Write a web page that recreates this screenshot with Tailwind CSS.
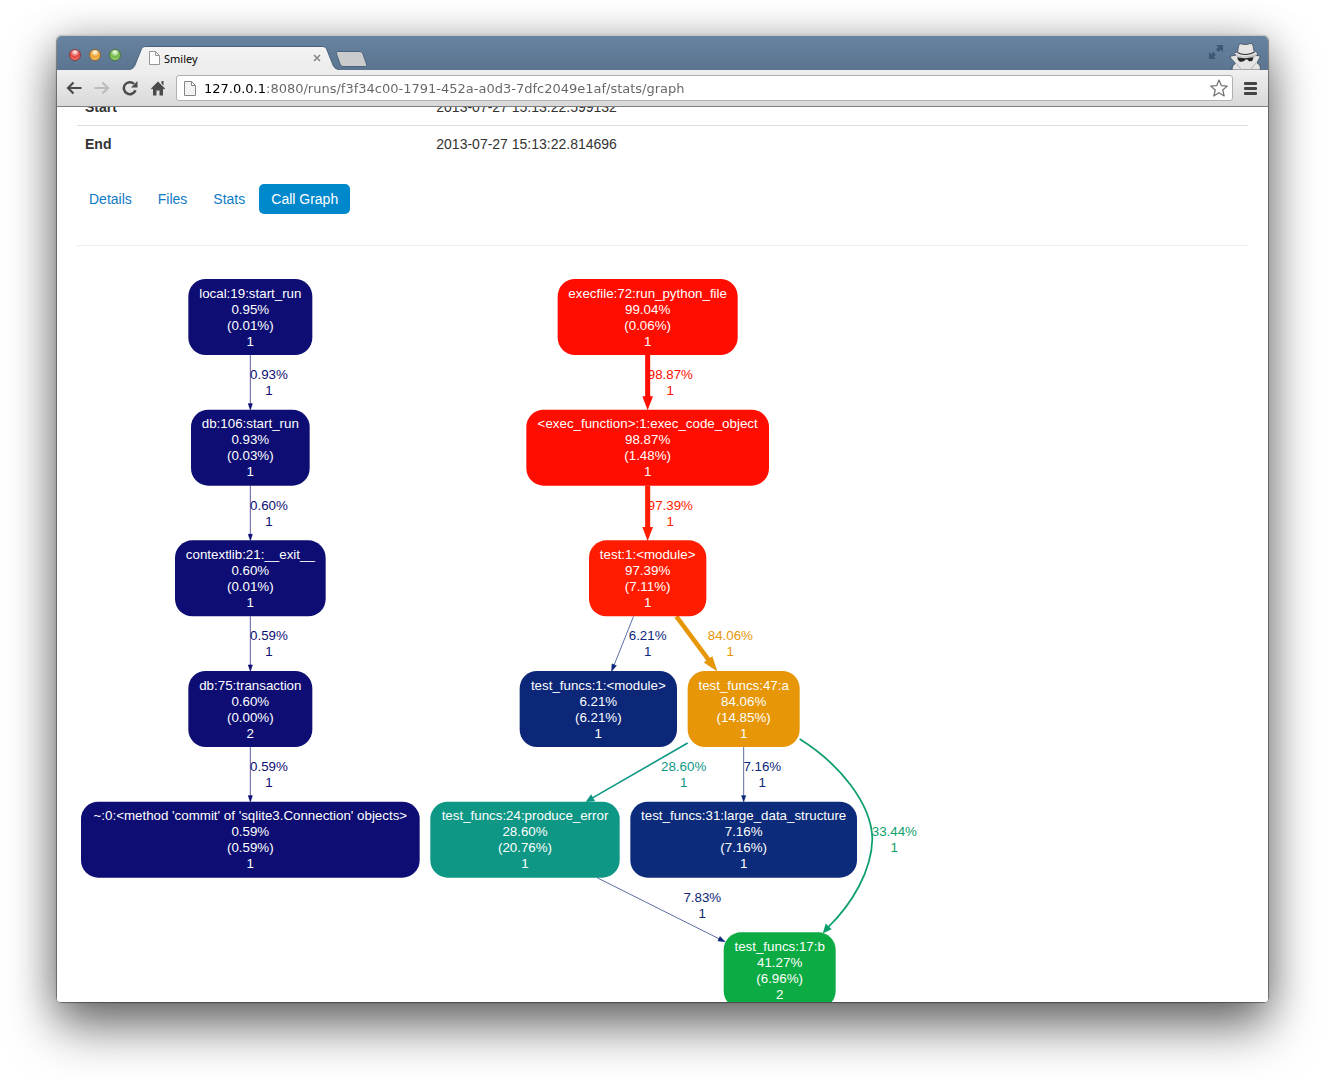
<!DOCTYPE html>
<html lang="en">
<head>
<meta charset="utf-8">
<title>Smiley</title>
<script src="https://cdn.jsdelivr.net/npm/@tailwindcss/browser@4"></script>
</head>
<body class="h-screen overflow-hidden bg-white px-[57px] pt-9 pb-[79px] font-['Liberation_Sans',Arial,sans-serif] text-sm text-[#333]">
<div class="flex h-full flex-col rounded-[5px] shadow-[0_-1px_0_0_#c4c8c8,0_0_1px_1px_rgba(0,0,0,0.4),0_26px_50px_rgba(0,0,0,0.5),0_4px_40px_rgba(0,0,0,0.28)]">

  <!-- Title bar with tabs -->
  <header class="flex h-[34px] shrink-0 items-end rounded-t-[5px] bg-linear-to-b from-[#67839f] to-[#5b7591]">
    <div class="flex h-full items-center gap-2 pt-1 pr-2 pl-3">
      <button aria-label="Close window" class="size-3 rounded-full border border-[#8f3a3a] bg-[radial-gradient(circle_at_50%_20%,#ffd9d6_10%,#e2453f_50%,#f58a80_100%)]"></button>
      <button aria-label="Minimize window" class="size-3 rounded-full border border-[#94662b] bg-[radial-gradient(circle_at_50%_20%,#fff0cd_10%,#eba135_50%,#fbd77c_100%)]"></button>
      <button aria-label="Zoom window" class="size-3 rounded-full border border-[#4c7a35] bg-[radial-gradient(circle_at_50%_20%,#e6f9d8_10%,#6fb648_50%,#b4e58c_100%)]"></button>
    </div>
    <div class="relative flex h-6 w-[210px] items-center pr-[18px] pl-5">
      <svg class="absolute inset-0" width="210" height="24" viewBox="0 0 210 24" aria-hidden="true">
        <defs><linearGradient id="tab" x2="0" y2="1"><stop stop-color="#f4f4f4"/><stop offset="1" stop-color="#ececec"/></linearGradient></defs>
        <path d="M0 24 C4 23 5 21 6 19 L12 4 C13 1.500 14 .5 17 .5 H193 C196 .5 197 1.500 198 4 L204 19 C205 21 206 23 210 24 Z" fill="url(#tab)"/>
        <path d="M0 23.500 C4 23 5 21 6 19 L12 4 C13 1.500 14 .5 17 .5 H193 C196 .5 197 1.500 198 4 L204 19 C205 21 206 23 210 23.500" fill="none" stroke="#4b6079"/>
      </svg>
      <svg class="relative shrink-0" width="11" height="14" viewBox="0 0 11 14" fill="#fdfdfd" stroke="#969696" aria-hidden="true"><path d="M.5 .5H6.500L10.500 4.500V13.500H.5ZM6.500 .5V4.500H10.500"/></svg>
      <span class="relative ml-1 flex-1 pt-px font-['Noto_Sans',sans-serif] text-[11px] text-black">Smiley</span>
      <button aria-label="Close tab" class="relative"><svg width="8" height="8" viewBox="0 0 8 8" stroke="#858585" stroke-width="1.500"><path d="M1 1L7 7M7 1L1 7"/></svg></button>
    </div>
    <button aria-label="New tab" class="-ml-1 self-start pt-[15px]">
      <svg width="34" height="17" viewBox="0 0 34 17"><path d="M3 .5H24C26 .5 27 1 28 3L31.500 13C32 15 31.500 15.500 30 15.500H9C7 15.500 6 15 5 13L1.500 3C1 1 1.500 .5 3 .5Z" fill="#c9cbcd" stroke="#4b6079"/></svg>
    </button>
    <div class="ml-auto flex h-full items-end pr-1.5">
      <button aria-label="Enter full screen" class="mr-1 self-start pt-2">
        <svg width="16" height="16" viewBox="0 0 16 16" fill="#3d5873"><path d="M8 1H15V8L12.700 5.700L10.500 8L8 5.500L10.300 3.300ZM1 8L3.300 10.300L5.500 8L8 10.500L5.700 12.700L8 15H1Z"/></svg>
      </button>
      <svg width="34" height="28" viewBox="0 0 34 28" role="img" aria-label="Incognito">
        <path d="M9.500 10L10.500 4C11 2 12.500 1.500 14 2C17 3 20 2.500 22 1.500C24 1 24.800 2.500 25.200 4.500L26 9C29 10 30.500 11.500 28.500 13.500L32.500 14L29 21C31.500 22 32.500 24 32.500 28H4C4 25 5 23 7.500 21.500L1.500 14.500L8 13C4.500 12 6 10.500 9.500 10Z" fill="#e4e4e4" stroke="#3e4d5e" stroke-width=".8"/>
        <path d="M8 12.500C14 15.500 22 15 28 12L28 14L26 15.500H9Z" fill="#bdbdbd"/>
        <path d="M9.500 10.500C14 13.500 22 13 26.500 10" fill="none" stroke="#2c2c2c" stroke-width="1.200"/>
        <path d="M9 15.500L17 16.200L25.500 15.200L24.500 18.500C23 20 20.500 19.500 19.500 17.500H17.500C16 20 12 20.500 10.500 18.500Z" fill="#262626"/>
        <path d="M8 21.500L14 28M28 21L22 28" fill="none" stroke="#b5b5b5"/>
      </svg>
    </div>
  </header>

  <!-- Toolbar -->
  <nav aria-label="Browser" class="flex h-[37px] shrink-0 items-center border-b border-[#7f7f7f] bg-linear-to-b from-[#efefef] to-[#d9d9d9] pr-[11px] pl-[9px]">
    <button aria-label="Back"><svg width="16" height="14" viewBox="0 0 16 14" fill="none" stroke="#4b4b4b" stroke-width="2.200"><path d="M15.500 7H2M7.500 1.500L2 7L7.500 12.500"/></svg></button>
    <button aria-label="Forward" class="ml-3"><svg width="16" height="14" viewBox="0 0 16 14" fill="none" stroke="#bcbcbc" stroke-width="2.200"><path d="M.5 7H14M8.500 1.500L14 7L8.500 12.500"/></svg></button>
    <button aria-label="Reload" class="ml-3"><svg width="16" height="16" viewBox="0 0 16 16"><path d="M13.500 10.200A6 6 0 1 1 12 3.800" fill="none" stroke="#4b4b4b" stroke-width="2.500"/><path d="M15.500 1V7.500H9Z" fill="#4b4b4b"/></svg></button>
    <button aria-label="Home" class="ml-3"><svg width="16" height="16" viewBox="0 0 16 16" fill="#4b4b4b"><path d="M8 1.500L15 8.500L14 9.500L13 8.700V15.500H9.500V10.500H6.500V15.500H3V8.700L2 9.500L1 8.500ZM11.500 1H13.500V5.500L11.500 3.500Z"/></svg></button>
    <div class="ml-2.5 flex h-[26px] flex-1 items-center rounded-[3px] border border-[#b0b0b0] bg-white pr-[3px] pl-[7px]">
      <svg class="shrink-0" width="12" height="15" viewBox="0 0 12 15" fill="#f3f3f3" stroke="#868686" aria-hidden="true"><path d="M.5 .5H7.500L11.500 4.500V14.500H.5ZM7.500 .5V4.500H11.500"/></svg>
      <input aria-label="Address" type="text" value="127.0.0.1:8080/runs/f3f34c00-1791-452a-a0d3-7dfc2049e1af/stats/graph" class="ml-2 h-5 min-w-0 flex-1 bg-[linear-gradient(90deg,#000_62px,#646464_62px)] bg-clip-text font-['DejaVu_Sans',sans-serif] text-[13px] text-transparent outline-none">
      <button aria-label="Bookmark"><svg width="20" height="20" viewBox="0 0 20 20" fill="#fff" stroke="#707070" stroke-width="1.200" stroke-linejoin="round"><path d="M10 2L12.300 7.600L18.300 8.100L13.700 12L15.200 18L10 14.800L4.800 18L6.300 12L1.700 8.100L7.700 7.600Z"/></svg></button>
    </div>
    <button aria-label="Menu" class="ml-[11px]"><svg width="13" height="13" viewBox="0 0 13 13" fill="#444"><rect width="13" height="3" rx="1"/><rect y="5" width="13" height="3" rx="1"/><rect y="10" width="13" height="3" rx="1"/></svg></button>
  </nav>

  <!-- Scrolled page -->
  <main class="min-h-0 flex-1 overflow-hidden rounded-b-[3px] bg-white px-5">
    <table class="-mt-[18px] w-full text-left">
      <tbody>
        <tr class="h-9"><th scope="row" class="w-[30%] px-2">Start</th><td class="px-2">2013-07-27 15:13:22.599132</td></tr>
        <tr class="h-[37px] border-t border-[#ddd]"><th scope="row" class="px-2">End</th><td class="px-2">2013-07-27 15:13:22.814696</td></tr>
      </tbody>
    </table>
    <ul class="mt-[22px] flex gap-0.5 leading-[30px] text-[#0e7ac4]">
      <li><a href="#details" class="block px-3">Details</a></li>
      <li><a href="#files" class="block px-3">Files</a></li>
      <li><a href="#stats" class="block px-3">Stats</a></li>
      <li><a href="#graph" aria-current="page" class="block rounded-[5px] bg-[#0088cc] px-3 text-white">Call Graph</a></li>
    </ul>
    <hr class="mt-[31px] border-[#eee]">

    <svg class="mt-[29px] block h-[760pt] w-[660pt]" viewBox="0 0 660 760" font-size="10" text-anchor="middle" role="img" aria-label="Call graph">
      <!-- Edges -->
      <g fill="#0d0d73" stroke="#0d0d73" stroke-width=".5">
        <path d="M130 60V97M130 158V195M130 256V293M130 354V391" fill="none"/>
        <path d="M128.500 96.500h3l-1.500 4.500zM128.500 194.500h3l-1.500 4.500zM128.500 292.500h3l-1.500 4.500zM128.500 390.500h3l-1.500 4.500z"/>
      </g>
      <path d="M428 60V93" stroke="#ff0d00" stroke-width="3.800"/><path d="M424 91h8l-4 10.500z" fill="#ff0d00"/>
      <path d="M428 158V191" stroke="#ff1c00" stroke-width="3.800"/><path d="M424 189h8l-4 10.500z" fill="#ff1c00"/>
      <g fill="#0c2678" stroke="#0c2678" stroke-width=".5">
        <path d="M417.400 256L402.900 292.400M500 354V391M390 452L481.500 497.800" fill="none"/>
        <path d="M404.500 293L401.300 291.700L401 297ZM498.500 390.500h3l-1.500 4.500zM482.300 496.200L480.700 499.400L486 500Z"/>
      </g>
      <path d="M449.500 256L474 289" stroke="#e69606" stroke-width="3.400"/><path d="M476.500 285.900L470.100 290.700L480.300 297.400Z" fill="#e69606"/>
      <path d="M458 351L387 392" stroke="#0e9785" stroke-width="1.200"/><path d="M388.600 394.600L385.600 389.400L381.500 395.300Z" fill="#0e9785"/>
      <path d="M542 348C571 366 596 396 596.500 423C596 447 581 472 563.500 489" fill="none" stroke="#0c9f6b" stroke-width="1.300"/><path d="M566 490.600L561.500 486.400L559.300 493.800Z" fill="#0c9f6b"/>

      <!-- Edge labels -->
      <g fill="#0d0d73">
        <text x="144" y="78">0.93%</text><text x="144" y="90">1</text>
        <text x="144" y="176">0.60%</text><text x="144" y="188">1</text>
        <text x="144" y="274">0.59%</text><text x="144" y="286">1</text>
        <text x="144" y="372">0.59%</text><text x="144" y="384">1</text>
      </g>
      <g fill="#ff0d00"><text x="445" y="78">98.87%</text><text x="445" y="90">1</text></g>
      <g fill="#ff1c00"><text x="445" y="176">97.39%</text><text x="445" y="188">1</text></g>
      <g fill="#0c2678">
        <text x="428" y="274">6.21%</text><text x="428" y="286">1</text>
        <text x="514" y="372">7.16%</text><text x="514" y="384">1</text>
        <text x="469" y="470">7.83%</text><text x="469" y="482">1</text>
      </g>
      <g fill="#e69606"><text x="490" y="274">84.06%</text><text x="490" y="286">1</text></g>
      <g fill="#0e9785"><text x="455" y="372">28.60%</text><text x="455" y="384">1</text></g>
      <g fill="#0c9f6b"><text x="613" y="421">33.44%</text><text x="613" y="433">1</text></g>

      <!-- Nodes -->
      <g fill="#0d0d73">
        <rect x="83.500" y="3" width="93" height="57" rx="13"/>
        <rect x="85.500" y="101" width="89" height="57" rx="13"/>
        <rect x="73.500" y="199" width="113" height="57" rx="13"/>
        <rect x="83.500" y="297" width="93" height="57" rx="13"/>
        <rect x="3" y="395" width="254" height="57" rx="13"/>
      </g>
      <rect x="360.500" y="3" width="135" height="57" rx="13" fill="#ff0d00"/>
      <rect x="337" y="101" width="182" height="57" rx="13" fill="#ff0d00"/>
      <rect x="384" y="199" width="88" height="57" rx="13" fill="#ff1c00"/>
      <rect x="332" y="297" width="118" height="57" rx="13" fill="#0c2678"/>
      <rect x="458" y="297" width="84" height="57" rx="13" fill="#e69606"/>
      <rect x="265" y="395" width="142" height="57" rx="13" fill="#0e9785"/>
      <rect x="415" y="395" width="170" height="57" rx="13" fill="#0c2b7a"/>
      <rect x="485" y="493" width="84" height="57" rx="13" fill="#0cab43"/>
      <g fill="#fff">
        <text x="130" y="17">local:19:start_run</text><text x="130" y="29">0.95%</text><text x="130" y="41">(0.01%)</text><text x="130" y="53">1</text>
        <text x="130" y="115">db:106:start_run</text><text x="130" y="127">0.93%</text><text x="130" y="139">(0.03%)</text><text x="130" y="151">1</text>
        <text x="130" y="213">contextlib:21:__exit__</text><text x="130" y="225">0.60%</text><text x="130" y="237">(0.01%)</text><text x="130" y="249">1</text>
        <text x="130" y="311">db:75:transaction</text><text x="130" y="323">0.60%</text><text x="130" y="335">(0.00%)</text><text x="130" y="347">2</text>
        <text x="130" y="409">~:0:&lt;method 'commit' of 'sqlite3.Connection' objects&gt;</text><text x="130" y="421">0.59%</text><text x="130" y="433">(0.59%)</text><text x="130" y="445">1</text>
        <text x="428" y="17">execfile:72:run_python_file</text><text x="428" y="29">99.04%</text><text x="428" y="41">(0.06%)</text><text x="428" y="53">1</text>
        <text x="428" y="115">&lt;exec_function&gt;:1:exec_code_object</text><text x="428" y="127">98.87%</text><text x="428" y="139">(1.48%)</text><text x="428" y="151">1</text>
        <text x="428" y="213">test:1:&lt;module&gt;</text><text x="428" y="225">97.39%</text><text x="428" y="237">(7.11%)</text><text x="428" y="249">1</text>
        <text x="391" y="311">test_funcs:1:&lt;module&gt;</text><text x="391" y="323">6.21%</text><text x="391" y="335">(6.21%)</text><text x="391" y="347">1</text>
        <text x="500" y="311">test_funcs:47:a</text><text x="500" y="323">84.06%</text><text x="500" y="335">(14.85%)</text><text x="500" y="347">1</text>
        <text x="336" y="409">test_funcs:24:produce_error</text><text x="336" y="421">28.60%</text><text x="336" y="433">(20.76%)</text><text x="336" y="445">1</text>
        <text x="500" y="409">test_funcs:31:large_data_structure</text><text x="500" y="421">7.16%</text><text x="500" y="433">(7.16%)</text><text x="500" y="445">1</text>
        <text x="527" y="507">test_funcs:17:b</text><text x="527" y="519">41.27%</text><text x="527" y="531">(6.96%)</text><text x="527" y="543">2</text>
      </g>
    </svg>
  </main>
</div>
</body>
</html>
